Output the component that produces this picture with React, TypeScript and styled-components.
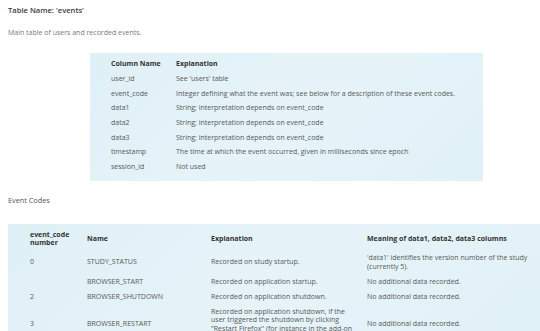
import styled, { createGlobalStyle } from "styled-components";

const GlobalStyle = createGlobalStyle`
  html, body {
    margin: 0;
    padding: 0;
    background: #ffffff;
    overflow: hidden;
  }
  body {
    font-family: "Open Sans", "DejaVu Sans", sans-serif;
    font-size: 7px;
    color: #585858;
  }
`;

const columns = [
  { name: "user_id", text: "See 'users' table" },
  {
    name: "event_code",
    text: "Integer defining what the event was; see below for a description of these event codes.",
  },
  { name: "data1", text: "String; interpretation depends on event_code" },
  { name: "data2", text: "String; interpretation depends on event_code" },
  { name: "data3", text: "String; interpretation depends on event_code" },
  {
    name: "timestamp",
    text: "The time at which the event occurred, given in milliseconds since epoch",
  },
  { name: "session_id", text: "Not used" },
];

const codes = [
  {
    num: "0",
    name: "STUDY_STATUS",
    text: "Recorded on study startup.",
    meaning: "'data1' identifies the version number of the study (currently 5).",
  },
  {
    num: "",
    name: "BROWSER_START",
    text: "Recorded on application startup.",
    meaning: "No additional data recorded.",
  },
  {
    num: "2",
    name: "BROWSER_SHUTDOWN",
    text: "Recorded on application shutdown.",
    meaning: "No additional data recorded.",
  },
  {
    num: "3",
    name: "BROWSER_RESTART",
    text: 'Recorded on application shutdown, if the user triggered the shutdown by clicking "Restart Firefox" (for instance in the add-on manager).',
    meaning: "No additional data recorded.",
  },
];

const App = () => {
  return (
    <Page>
      <GlobalStyle />
      <Title>Table Name: 'events'</Title>
      <Description>Main table of users and recorded events.</Description>
      <ColumnsBox>
        <HeadCell>Column Name</HeadCell>
        <HeadCell>Explanation</HeadCell>
        {columns.flatMap((c) => [
          <Cell key={c.name}>{c.name}</Cell>,
          <Cell key={c.name + "-t"}>{c.text}</Cell>,
        ])}
      </ColumnsBox>
      <SectionTitle>Event Codes</SectionTitle>
      <CodesBox>
        <CodeRow>
          <HeadCell>
            event_code
            <br />
            number
          </HeadCell>
          <HeadCell>Name</HeadCell>
          <HeadCell>Explanation</HeadCell>
          <HeadCell>Meaning of data1, data2, data3 columns</HeadCell>
        </CodeRow>
        {codes.map((c) => (
          <CodeRow key={c.name}>
            <Cell>{c.num}</Cell>
            <Cell>{c.name}</Cell>
            <WrapCell>{c.text}</WrapCell>
            <WrapCell $gap={6}>{c.meaning}</WrapCell>
          </CodeRow>
        ))}
      </CodesBox>
    </Page>
  );
};

export default App;

const Page = styled.div`
  width: 540px;
  height: 331px;
  overflow: hidden;
  padding-left: 8px;
  box-sizing: border-box;
`;

const Title = styled.div`
  margin-top: 5.5px;
  line-height: 9px;
  font-size: 7.6px;
  font-weight: 600;
  color: #3c3c3c;
`;

const Description = styled.div`
  margin-top: 13.5px;
  line-height: 9px;
  color: #7a7a7a;
`;

const panelBackground = "linear-gradient(135deg, #dff0f6 0%, #e6f4f9 50%, #e0f1f7 100%)";

const ColumnsBox = styled.div`
  margin: 15.5px 0 0 82px;
  width: 393px;
  height: 128px;
  box-sizing: border-box;
  padding: 4.6px 21px;
  background: ${panelBackground};
  display: grid;
  grid-template-columns: 65px 1fr;
  grid-auto-rows: 14.7px;
  align-items: center;
`;

const HeadCell = styled.div`
  font-weight: 700;
  color: #333333;
  line-height: 8.5px;
  white-space: nowrap;
`;

const Cell = styled.div`
  line-height: 8.5px;
  white-space: nowrap;
`;

const WrapCell = styled.div<{ $gap?: number }>`
  line-height: 8.5px;
  padding-right: ${(p) => p.$gap ?? 14}px;
`;

const SectionTitle = styled.div`
  margin-top: 15.5px;
  line-height: 9px;
  font-size: 7.3px;
  color: #555555;
`;

const CodesBox = styled.div`
  margin-top: 18.5px;
  width: 532px;
  height: 120px;
  box-sizing: border-box;
  padding: 3.75px 0 0 22px;
  background: ${panelBackground};
`;

const CodeRow = styled.div`
  display: grid;
  grid-template-columns: 57px 124px 156px 176px;
  align-items: center;
  padding: 3.25px 0;
`;
